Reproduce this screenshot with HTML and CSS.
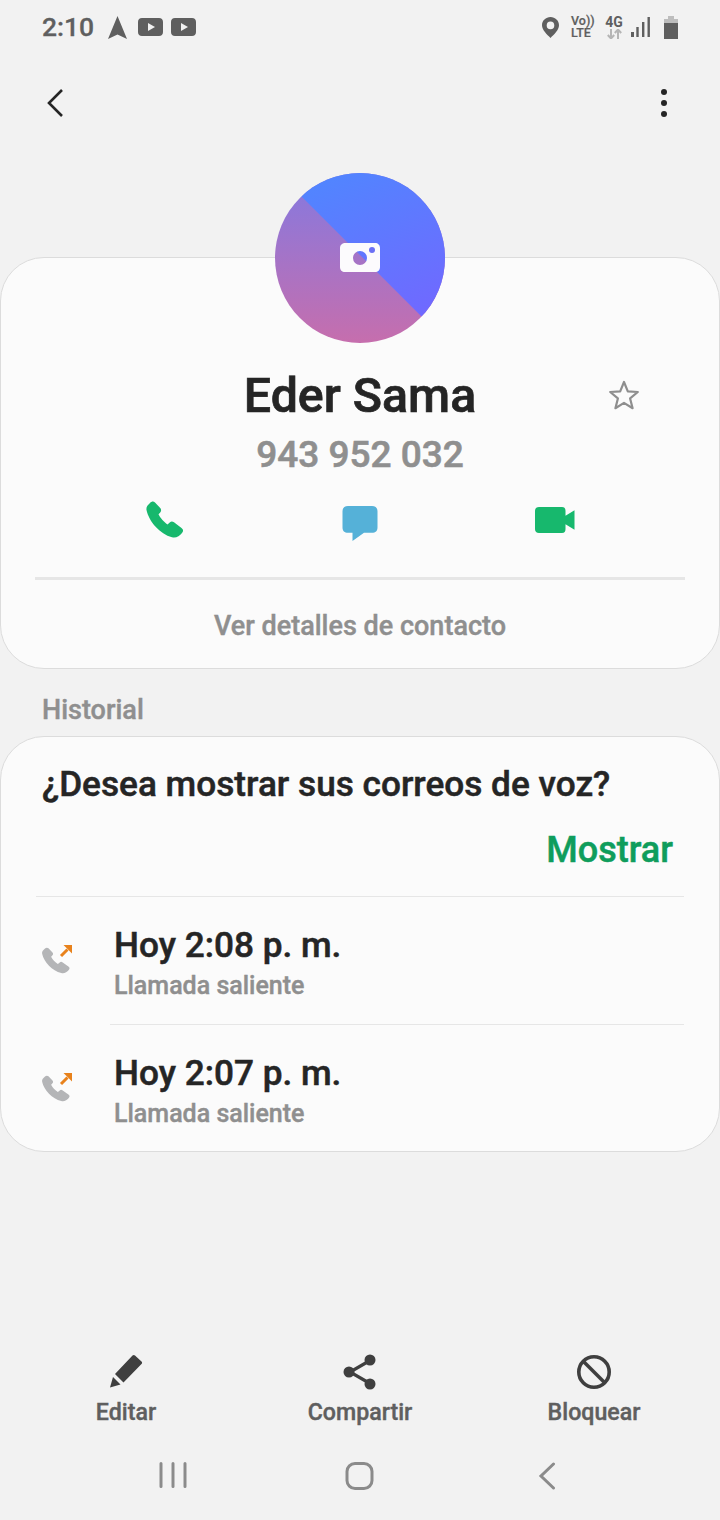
FILE: index.html
```html
<!DOCTYPE html>
<html lang="es">
<head>
<meta charset="utf-8">
<title>Eder Sama</title>
<link rel="stylesheet" href="styles.css">
</head>
<body>
<svg class="defs" width="0" height="0" aria-hidden="true">
  <symbol id="handset" viewBox="0 0 40 44" preserveAspectRatio="none">
    <path d="M5 7.5C6.5 6 8.5 5.5 10 7L15 12C16.5 13.5 16.5 15 15 16.5L13.5 18C15 21 19 25.5 22.5 27.5L25 25.5C26 24.5 27.5 24.5 29 25.5L36.5 31C38.5 32.5 38.5 34 37 35.5C34.5 38.5 31 40.5 27 39.5C15 36.5 4 25 1.5 14C1 11.5 2.5 9.5 5 7.5Z"/>
  </symbol>
  <symbol id="yt" viewBox="0 0 25 18">
    <path fill-rule="evenodd" d="M4 0H21C23.5 0 25 1.5 25 4V14C25 16.5 23.5 18 21 18H4C1.5 18 0 16.5 0 14V4C0 1.5 1.5 0 4 0ZM10 5V13L17 9Z"/>
  </symbol>
  <symbol id="outgoing" viewBox="0 0 34 36">
    <use href="#handset" x="0" y="2" width="30" height="33.500" fill="#b4b5b7"/>
    <path d="M20 15L26.500 8.500" fill="none" stroke="#e8821c" stroke-width="3"/>
    <path d="M22.500 4H31V12.500Z" fill="#e8821c"/>
  </symbol>
</svg>
<div class="screen">
  <header class="status">
    <span class="time">2:10</span>
    <svg class="st-nav" width="19" height="23" viewBox="0 0 19 23"><path d="M9.5 0L19 23L9.5 18.5L0 23Z"/></svg>
    <svg class="st-yt" width="25" height="18"><use href="#yt"/></svg>
    <svg class="st-yt2" width="25" height="18"><use href="#yt"/></svg>
    <span class="st-spacer"></span>
    <svg class="st-loc" width="17" height="21" viewBox="0 0 17 21"><path fill-rule="evenodd" d="M8.5 0C13.2 0 17 3.6 17 8.3C17 13 12 17.5 8.5 21C5 17.5 0 13 0 8.3C0 3.6 3.8 0 8.5 0ZM8.5 4.6A3.8 3.8 0 1 0 8.5 12.2A3.8 3.8 0 1 0 8.5 4.6Z"/></svg>
    <span class="st-volte"><span>Vo))</span><span>LTE</span></span>
    <span class="st-4g"><span>4G</span>
      <svg width="15" height="10" viewBox="0 0 15 10"><path d="M4 0V9M0.8 6L4 9.5L7.2 6" fill="none" stroke="#b5b5b5" stroke-width="2"/><path d="M11 10V1M7.8 4L11 0.5L14.2 4" fill="none" stroke="#b5b5b5" stroke-width="2"/></svg>
    </span>
    <svg class="st-signal" width="19" height="20" viewBox="0 0 19 20"><path d="M0 15h3v5H0zM5.300 10h2.400v10H5.300zM11 5h2.400v15H11zM16.500 0h2.400v20h-2.400z"/></svg>
    <svg class="st-batt" width="14" height="23" viewBox="0 0 14 23"><path d="M4 0h6v3H4z" fill="#bdbdbd"/><path d="M0 3h14v4H0z" fill="#bdbdbd"/><path d="M0 7h14v16H0z"/></svg>
  </header>

  <nav class="appbar">
    <svg width="18" height="30" viewBox="0 0 18 30"><path d="M16 2L3 15L16 28" fill="none" stroke="#252525" stroke-width="2.600"/></svg>
    <svg width="8" height="30" viewBox="0 0 8 30"><circle cx="4" cy="4" r="3"/><circle cx="4" cy="15" r="3"/><circle cx="4" cy="26" r="3"/></svg>
  </nav>

  <svg class="avatar" width="170" height="170" viewBox="0 0 170 170">
    <defs>
      <linearGradient id="ga" x1="0" y1="0" x2="0" y2="1"><stop offset="0.1" stop-color="#8a78dc"/><stop offset="1" stop-color="#c66ead"/></linearGradient>
      <linearGradient id="gb" x1="0.3" y1="0" x2="0.8" y2="1"><stop offset="0" stop-color="#5086ff"/><stop offset="1" stop-color="#7366ff"/></linearGradient>
      <clipPath id="disc"><circle cx="85" cy="85" r="85"/></clipPath>
    </defs>
    <g clip-path="url(#disc)">
      <rect width="170" height="170" fill="url(#ga)"/>
      <path d="M0 -3H170V167Z" fill="url(#gb)"/>
    </g>
    <path fill="#fcfbfd" fill-rule="evenodd" d="M71 70H100C103 70 105 72 105 75V94C105 97 103 99 100 99H70C67 99 65 97 65 94V75C65 72 67 70 71 70ZM85 78A7 7 0 1 0 85 92A7 7 0 1 0 85 78Z"/>
    <circle cx="97" cy="77" r="3" fill="#6b70f5"/>
  </svg>

  <section class="card contact">
    <div class="name-row">
      <h1 class="name">Eder Sama</h1>
      <svg class="star" width="32" height="32" viewBox="0 0 32 32"><path d="M16 3L19.800 12.300L29.800 13L22.100 19.400L24.600 29.200L16 23.900L7.400 29.200L9.900 19.400L2.200 13L12.200 12.300Z" fill="none" stroke="#8e8e8e" stroke-width="2.200" stroke-linejoin="round"/></svg>
    </div>
    <p class="number">943 952 032</p>
    <div class="actions">
      <svg class="ic-call" width="40" height="47"><use href="#handset" width="40" height="47"/></svg>
      <svg class="ic-msg" width="36" height="35" viewBox="0 0 36 36" preserveAspectRatio="none"><path d="M6 0H30C33.500 0 35.500 2 35.500 5.500V22C35.500 25.500 33.500 27.500 30 27.500H22L10.500 36V27.500H6C2.500 27.500 0.500 25.500 0.500 22V5.500C0.500 2 2.500 0 6 0Z"/></svg>
      <svg class="ic-video" width="40" height="26" viewBox="0 0 40 27" preserveAspectRatio="none"><path d="M4 0H27C29.500 0 30.500 1.500 30.500 4V9L39.500 3.500V23.500L30.500 18V23C30.500 25.500 29.500 27 27 27H4C1.500 27 0 25.500 0 23V4C0 1.500 1.500 0 4 0Z"/></svg>
    </div>
    <div class="rule"></div>
    <div class="details">Ver detalles de contacto</div>
  </section>

  <h2 class="section-label">Historial</h2>

  <section class="card history">
    <p class="prompt">¿Desea mostrar sus correos de voz?</p>
    <div class="prompt-action">Mostrar</div>
    <div class="divider"></div>
    <div class="call">
      <svg class="call-ic" width="34" height="36"><use href="#outgoing"/></svg>
      <div class="call-text"><div class="call-time">Hoy 2:08 p. m.</div><div class="call-type">Llamada saliente</div></div>
    </div>
    <div class="divider inset"></div>
    <div class="call">
      <svg class="call-ic" width="34" height="36"><use href="#outgoing"/></svg>
      <div class="call-text"><div class="call-time">Hoy 2:07 p. m.</div><div class="call-type">Llamada saliente</div></div>
    </div>
  </section>

  <div class="grow"></div>

  <div class="tools">
    <div class="tool">
      <svg width="36" height="36" viewBox="0 0 36 36"><path d="M24.500 1.500C25.300 0.800 26.300 0.800 27 1.500L33.500 7.500C34.300 8.300 34.300 9.200 33.500 10L15.500 28.500L7 20Z" fill="#3f3f3f"/><path d="M5 23L12.500 30.500L2 33.500Z" fill="#3f3f3f"/></svg>
      <span>Editar</span>
    </div>
    <div class="tool">
      <svg width="36" height="36" viewBox="0 0 36 36"><path d="M28 6.500L8 18L28 29.500" fill="none" stroke="#3f3f3f" stroke-width="3.200"/><circle cx="28" cy="6" r="5.500" fill="#3f3f3f"/><circle cx="7" cy="18" r="5.500" fill="#3f3f3f"/><circle cx="28" cy="30" r="5.500" fill="#3f3f3f"/></svg>
      <span>Compartir</span>
    </div>
    <div class="tool">
      <svg width="36" height="36" viewBox="0 0 36 36"><circle cx="18" cy="18" r="15.200" fill="none" stroke="#3f3f3f" stroke-width="3.600"/><path d="M7.500 7.500L28.500 28.500" stroke="#3f3f3f" stroke-width="3.600"/></svg>
      <span>Bloquear</span>
    </div>
  </div>

  <footer class="softkeys">
    <svg width="28" height="26" viewBox="0 0 28 26"><path d="M2 1.500V24.500M14 1.500V24.500M26 1.500V24.500" fill="none" stroke="#8b8b8b" stroke-width="3" stroke-linecap="round"/></svg>
    <svg width="30" height="28" viewBox="0 0 30 28"><rect x="2" y="1.500" width="25" height="25" rx="8" fill="none" stroke="#8b8b8b" stroke-width="3"/></svg>
    <svg width="18" height="28" viewBox="0 0 18 28"><path d="M15.500 2L3 14L15.500 26" fill="none" stroke="#8b8b8b" stroke-width="3" stroke-linecap="round"/></svg>
  </footer>
</div>
</body>
</html>
```

FILE: styles.css
```css
* { box-sizing: border-box; }
html, body { margin: 0; padding: 0; }
body { font-family: Roboto, "Liberation Sans", sans-serif; background: #f2f2f2; }
.defs { position: absolute; }
.screen { width: 720px; height: 1520px; display: flex; flex-direction: column; overflow: hidden; background: #f2f2f2; }

.status { height: 54px; display: flex; align-items: center; padding: 0 42px; color: #5f5f5f; fill: #5f5f5f; flex: none; }
.time { font-size: 26.5px; font-weight: 500; line-height: 54px; width: 52px; -webkit-text-stroke: 0.3px #5f5f5f; }
.st-nav { margin-left: 14px; }
.st-yt { margin-left: 11px; }
.st-yt2 { margin-left: 8px; }
.st-spacer { flex: 1; }
.st-loc { margin-right: 12px; }
.st-volte { display: flex; flex-direction: column; font-size: 12.5px; line-height: 12px; font-weight: 500; width: 22px; margin-right: 13px; -webkit-text-stroke: 0.2px #5f5f5f; }
.st-4g { display: flex; flex-direction: column; font-size: 14px; line-height: 13px; font-weight: 700; width: 16px; margin-right: 9px; align-items: center; }
.st-signal { margin-right: 14px; }

.appbar { height: 96px; padding: 2px 52px 0 46px; display: flex; align-items: center; justify-content: space-between; flex: none; fill: #252525; }

.avatar { display: block; align-self: center; flex: none; margin-top: 23px; margin-bottom: -86px; position: relative; z-index: 1; }

.card { background: #fbfbfb; border: 1px solid #dcdcdc; border-radius: 44px; flex: none; }
.contact { height: 412px; padding: 100px 34px 0; display: flex; flex-direction: column; }
.name-row { position: relative; display: flex; justify-content: center; height: 76px; }
.name { margin: 0; font-size: 48.3px; font-weight: 500; color: #252525; line-height: 76px; -webkit-text-stroke: 0.7px #252525; }
.star { position: absolute; left: 573px; top: 21px; }
.number { margin: 1px 0 0; text-align: center; font-size: 37px; font-weight: 500; color: #8f8f8f; line-height: 40px; height: 40px; -webkit-text-stroke: 0.6px #8f8f8f; }
.actions { display: flex; justify-content: space-between; padding: 0 110px; height: 79px; margin-top: 23px; align-items: flex-start; }
.ic-call { fill: #17b86d; margin-top: -3px; }
.ic-msg { fill: #55b1d8; margin-top: 8px; }
.ic-video { fill: #17b86d; margin-top: 9px; }
.rule { height: 3px; background: #e6e6e6; flex: none; }
.details { text-align: center; font-size: 27px; font-weight: 500; color: #8f8f8f; line-height: 36px; margin-top: 28px; -webkit-text-stroke: 0.4px #8f8f8f; }

.section-label { margin: 0; font-size: 27px; font-weight: 500; color: #8f8f8f; line-height: 36px; padding: 23px 42px 8px; flex: none; height: 67px; -webkit-text-stroke: 0.4px #8f8f8f; }

.history { height: 416px; padding-top: 26px; display: flex; flex-direction: column; }
.prompt { margin: 0; padding-left: 41px; font-size: 35.2px; font-weight: 500; color: #252525; line-height: 42px; -webkit-text-stroke: 0.5px #252525; }
.prompt-action { text-align: right; padding-right: 46px; font-size: 36px; font-weight: 500; color: #0f9d5c; line-height: 44px; margin-top: 23px; -webkit-text-stroke: 0.5px #0f9d5c; }
.divider { height: 1px; background: #e6e6e6; margin: 24px 35px 0; flex: none; }
.divider.inset { margin: 0 35px 0 109px; }
.call { height: 127px; display: flex; align-items: flex-start; padding-left: 40px; }
.call-ic { margin-top: 44px; flex: none; }
.call-text { padding-left: 39px; padding-top: 26px; }
.call-time { font-size: 35.2px; font-weight: 500; color: #252525; line-height: 44px; -webkit-text-stroke: 0.5px #252525; }
.call-type { font-size: 25px; font-weight: 500; color: #8f8f8f; line-height: 34px; margin-top: 2px; -webkit-text-stroke: 0.4px #8f8f8f; }

.grow { flex: 1; }

.tools { display: grid; grid-template-columns: repeat(3, 234px); justify-content: center; flex: none; height: 108px; }
.tool { display: flex; flex-direction: column; align-items: center; color: #5f5f5f; font-size: 23.2px; font-weight: 500; -webkit-text-stroke: 0.4px #5f5f5f; }
.tool span { line-height: 34px; margin-top: 5px; }
.tool svg { flex: none; }

.softkeys { height: 58px; flex: none; display: grid; grid-template-columns: repeat(3, 187px); justify-content: center; justify-items: center; align-items: start; }
```
